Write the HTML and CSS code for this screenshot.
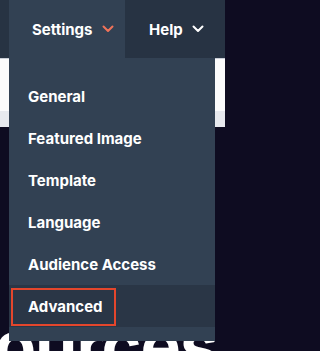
FILE: index.html
```html
<!DOCTYPE html>
<html>
<head>
<meta charset="utf-8">
<link rel="stylesheet" href="styles.css">
</head>
<body>
<header class="topbar">
  <div class="edge"></div>
  <div class="tab active">
    <span class="tab-label">Settings</span>
    <svg class="chev chev-orange" width="12" height="8" viewBox="0 0 12 8"><path d="M1.5 1.5 L6 6 L10.5 1.5" fill="none" stroke-width="2" stroke-linecap="round" stroke-linejoin="round"/></svg>
  </div>
  <div class="tab">
    <span class="tab-label">Help</span>
    <svg class="chev chev-white" width="12" height="8" viewBox="0 0 12 8"><path d="M1.5 1.5 L6 6 L10.5 1.5" fill="none" stroke-width="2" stroke-linecap="round" stroke-linejoin="round"/></svg>
  </div>
</header>
<main class="page">
  <div class="white-band"></div>
  <div class="grey-band"></div>
  <section class="hero">
    <h1 class="hero-title">Resources</h1>
  </section>
</main>
<nav class="dropdown">
  <a class="item">General</a>
  <a class="item">Featured Image</a>
  <a class="item">Template</a>
  <a class="item">Language</a>
  <a class="item">Audience Access</a>
  <a class="item hovered"><span class="focus-box"></span>Advanced</a>
</nav>
</body>
</html>
```
FILE: styles.css
```css
html, body {
  margin: 0;
  padding: 0;
  width: 225px;
  height: 351px;
  overflow: hidden;
}
body {
  background: #0e0c21;
  font-family: "Inter", "Noto Sans", sans-serif;
  position: relative;
}
.topbar {
  display: flex;
  height: 58px;
  background: #273343;
}
.edge {
  width: 9px;
}
.tab {
  display: flex;
  align-items: center;
  padding-left: 24px;
  color: #ffffff;
  font-size: 15px;
  font-weight: 700;
}
.tab.active {
  width: 116px;
  box-sizing: border-box;
  padding-left: 23px;
  background: #324153;
}
.tab-label {
  margin-right: 9px;
}
.chev {
  display: block;
}
.chev-orange path { stroke: #f0735a; }
.chev-white path { stroke: #ffffff; }
.page {
  display: flex;
  flex-direction: column;
  height: 293px;
  overflow: hidden;
}
.white-band {
  height: 53px;
  flex: none;
  background: #fbfbfc;
  border-top: 1px solid #c9ced6;
  box-sizing: border-box;
}
.grey-band {
  height: 16px;
  flex: none;
  background: #e7e9ee;
}
.hero {
  flex: 1;
  min-height: 0;
  overflow: hidden;
  background: #0e0c21;
  padding-top: 184px;
}
.hero-title {
  margin: 0 0 0 -125px;
  color: #ffffff;
  font-size: 68px;
  font-weight: 700;
  line-height: 1;
  letter-spacing: -1px;
  white-space: nowrap;
}
.dropdown {
  position: absolute;
  top: 58px;
  left: 9px;
  width: 206px;
  box-sizing: border-box;
  padding: 17px 0 14px;
  background: #324153;
  display: flex;
  flex-direction: column;
}
.item {
  position: relative;
  display: flex;
  align-items: center;
  height: 42px;
  padding-left: 19px;
  color: #ffffff;
  font-size: 15px;
  font-weight: 700;
}
.item.hovered {
  background: #2a3646;
}
.focus-box {
  position: absolute;
  left: 2px;
  top: 3px;
  width: 105px;
  height: 38px;
  box-sizing: border-box;
  border: 2px solid #e4462c;
}
```
